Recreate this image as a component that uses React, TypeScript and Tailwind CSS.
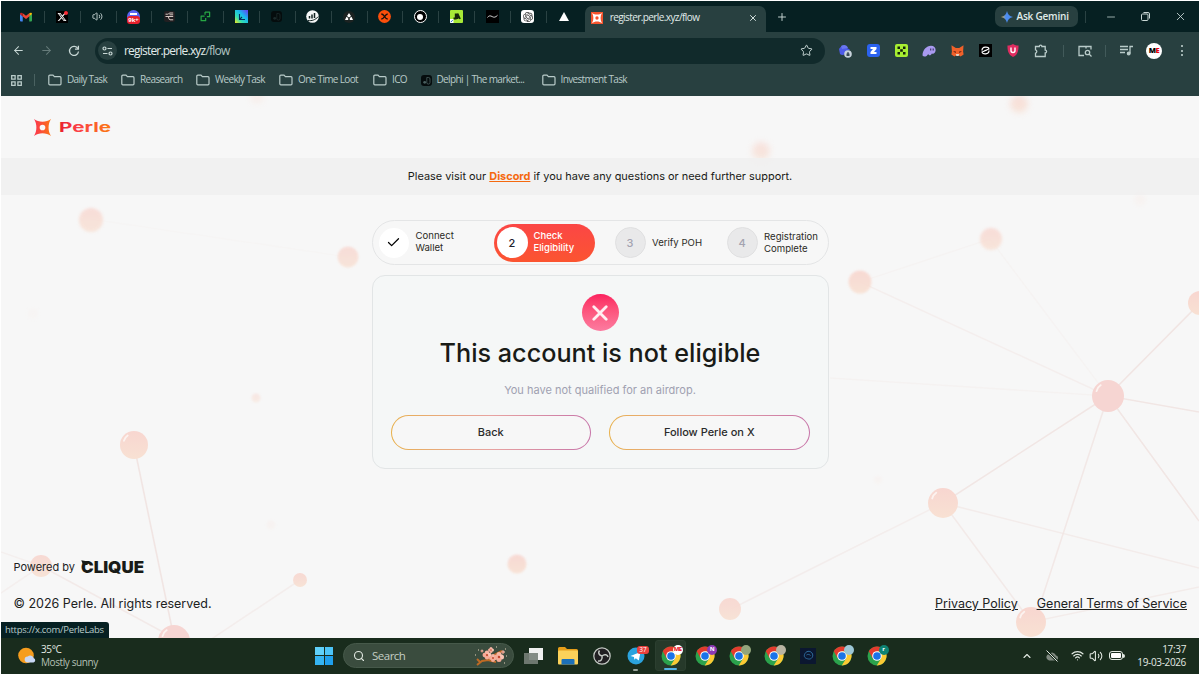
import { ReactNode } from "react";
import {
  ArrowLeft,
  ArrowRight,
  Check,
  ChevronUp,
  Minus,
  Plus,
  Search,
  Star,
  Volume2,
  Wifi,
  X,
} from "lucide-react";
import { FaXTwitter } from "react-icons/fa6";
import { SiOpenai } from "react-icons/si";

const tabIcons: ReactNode[] = [
  <svg key="gmail" width="12" height="10" viewBox="0 0 24 18">
    <path d="M0 2v14a2 2 0 0 0 2 2h3.500V8z" fill="#4285f4" />
    <path d="M24 2v14a2 2 0 0 1-2 2h-3.500V8z" fill="#34a853" />
    <path d="M18.500 8V1.500C20 0 24-.5 24 3z" fill="#fbbc04" />
    <path d="M5.500 8l6.500 5 6.500-5V1.500L12 6.500 5.500 1.500z" fill="#ea4335" />
    <path d="M0 3.500V3C0-.5 4 0 5.500 1.500V8z" fill="#c5221f" />
  </svg>,
  <span key="x" className="relative flex size-3 items-center justify-center bg-black text-white">
    <FaXTwitter size={10} />
    <span className="absolute top-0 right-0 size-[4px] rounded-full bg-red-500" />
  </span>,
  <Volume2 key="sound" size={11} className="text-[#c9d8d6]" />,
  <span key="chat" className="relative size-[13px] rounded-full bg-[#5865f2]">
    <span className="absolute top-[3px] left-[3px] h-[2px] w-[7px] bg-white" />
    <span className="absolute bottom-[-1px] left-0 flex h-[8px] w-[13px] items-center justify-center rounded-[3px] bg-[#e6202c] text-[6px] font-bold text-white">
      9k+
    </span>
  </span>,
  <svg key="e" width="11" height="11" viewBox="0 0 11 11" fill="none">
    <rect width="11" height="11" rx="2" fill="#211f21" />
    <path d="M1.500 3.200h2.300C5 3.200 4.500 2 6 2h3.200M1.500 5.500h7.700M3.800 5.500c1.200 0 .7 3.300 2.200 3.300h3.200M5.500 3.800h3.700" stroke="#d8c9c4" />
  </svg>,
  <svg key="green" width="11" height="11" viewBox="0 0 12 12" fill="none" stroke="#27a844" strokeWidth="1.300" strokeLinejoin="round">
    <path d="M5.500 1.200h5v5h-3M5 5.500H1.200v5h5V7.500M5.500 1.200v3" />
  </svg>,
  <svg key="l" width="13" height="13" viewBox="0 0 13 13">
    <defs>
      <linearGradient id="lg" x1="0" y1="1" x2="1" y2="0">
        <stop offset="0" stopColor="#f7e51b" />
        <stop offset=".3" stopColor="#35e0b0" />
        <stop offset=".6" stopColor="#17b9ee" />
        <stop offset="1" stopColor="#6b35f0" />
      </linearGradient>
    </defs>
    <rect width="13" height="13" fill="url(#lg)" />
    <path d="M4.500 4v5.500H10M4.500 9.500L7 7" stroke="#072b5c" strokeWidth="1.100" fill="none" />
  </svg>,
  <DelphiIcon key="delphi" dim />,
  <svg key="bars" width="13" height="13" viewBox="0 0 13 13">
    <circle cx="6.500" cy="6.500" r="6.300" fill="#f4f6f6" />
    <path d="M3.500 8.500V6M6 8.500V4.500M8.500 8V3" stroke="#10211f" strokeWidth="1.500" />
    <path d="M2 10.500c4 .6 7-.5 10.500-4" stroke="#10211f" fill="none" />
  </svg>,
  <svg key="peak" width="12" height="12" viewBox="0 0 12 12">
    <circle cx="6" cy="6" r="6" fill="#1b2221" />
    <path d="M6 2l2 3-2 1.500L4 5zM3.500 5.700L5.200 7v2H2zM8.500 5.700L6.800 7v2H10z" fill="#fff" />
  </svg>,
  <svg key="orange" width="13" height="13" viewBox="0 0 13 13">
    <circle cx="6.500" cy="6.500" r="6.400" fill="#fc4f0b" />
    <path
      d="M3.300 4c2.500.2 2.500 2 3.200 2.500C7.200 7 7.200 4.200 9.700 4M3.300 9c2.500-.2 2.500-2 3.200-2.500.7.500.7 2.300 3.200 2.500"
      stroke="#17100c"
      strokeWidth="1.300"
      fill="none"
    />
  </svg>,
  <span key="ring" className="flex size-[13px] items-center justify-center rounded-full border-[1.500px] border-white bg-black">
    <span className="size-[6px] rounded-full bg-white" />
  </span>,
  <svg key="lime" width="13" height="13" viewBox="0 0 13 13">
    <rect width="13" height="13" rx="1" fill="#a7e937" />
    <path d="M3.500 8.500h2.200V3.500M7.500 9V3.500L10 9" stroke="#16260a" strokeWidth="1.800" fill="none" />
    <path d="M0 9h3.500v4H0z" fill="#fff" />
    <path d="M.7 12.200l2-2" stroke="#2463c8" />
  </svg>,
  <svg key="wave" width="13" height="13" viewBox="0 0 13 13">
    <rect width="13" height="13" fill="#000" />
    <path d="M1.500 7.500c1.200-2 3-2 4.700-.9C8 7.600 9.500 7.500 11.500 5.300" stroke="#e7e7e7" strokeWidth=".9" fill="none" />
  </svg>,
  <span key="gpt" className="flex size-[13px] items-center justify-center rounded-[3px] bg-white text-[#333]">
    <SiOpenai size={10} />
  </span>,
  <svg key="tri" width="10" height="9" viewBox="0 0 10 9">
    <path d="M5 0l5 9H0z" fill="#fff" />
  </svg>,
];

function DelphiIcon({ dim = false }: { dim?: boolean }) {
  const ink = dim ? "#1c2b2c" : "#4a6060";
  return (
    <svg width="11" height="11" viewBox="0 0 11 11" className="shrink-0">
      <rect width="11" height="11" rx="3" fill="#050c0d" />
      <path d="M5.800 2.500h1.700A1.500 1.500 0 0 1 9 4v3.500A1.500 1.500 0 0 1 5.800 7.500z" fill="none" stroke={ink} strokeWidth=".8" />
      <circle cx="3.700" cy="7.300" r="1.400" fill={ink} />
    </svg>
  );
}

function FolderIcon() {
  return (
    <svg width="14" height="12" viewBox="0 0 14 12" fill="none" stroke="#b9cbc9" strokeWidth="1.200" className="shrink-0">
      <path d="M.8 9.800V2.200A1 1 0 0 1 1.800 1.200H5L6.400 2.700h5.600a1 1 0 0 1 1 1v6.100a1 1 0 0 1-1 1H1.800a1 1 0 0 1-1-1z" />
    </svg>
  );
}

function ReloadIcon() {
  return (
    <svg width="12" height="12" viewBox="0 0 12 12" fill="none" stroke="#c9d8d6" strokeWidth="1.300">
      <path d="M9.900 3.600A4.500 4.500 0 1 0 10.500 6.500" />
      <path d="M10.400.8v3.400H7" />
    </svg>
  );
}

function TuneIcon() {
  return (
    <svg width="11" height="10" viewBox="0 0 11 10" fill="none" stroke="#c9d8d6" strokeWidth="1.200">
      <circle cx="2.500" cy="2.500" r="1.500" />
      <path d="M5.500 2.500H10M1 7.500h4.500" />
      <circle cx="8.500" cy="7.500" r="1.500" />
    </svg>
  );
}

function PerleMark({ size, fill }: { size: number; fill: string }) {
  return (
    <svg width={size} height={size} viewBox="0 0 18 18" className="shrink-0">
      <defs>
        <linearGradient id="perle" x1="0" y1="0" x2="1" y2="0">
          <stop offset="0" stopColor="#fb3350" />
          <stop offset="1" stopColor="#fb7414" />
        </linearGradient>
      </defs>
      <path
        fillRule="evenodd"
        fill={fill}
        d="M0 0C5 3.800 13 3.800 18 0C14.600 5 14.600 13 18 18C13 14.200 5 14.200 0 18C3.400 13 3.400 5 0 0zM9 6A3 3 0 1 0 9 12A3 3 0 1 0 9 6z"
      />
    </svg>
  );
}

const extensions: ReactNode[] = [
  <svg key="bird" width="14" height="14" viewBox="0 0 14 14">
    <path d="M1 5C3 1.500 7 1 9 4l3 1.500-3 1.500c-1 4-5 5-7 3z" fill="#4d5be8" />
    <path d="M3 2C6 0 9 1 10 4L4 5z" fill="#6a76f2" />
    <circle cx="10" cy="10" r="3.800" fill="#c8d3dc" />
    <path d="M8.500 9.500h3v2.500h-3zM9.200 9.500V8.200h1.600v1.300" fill="#394b58" />
  </svg>,
  <span key="z" className="flex size-[13px] items-center justify-center rounded-[3px] bg-[#2b62ef]">
    <svg width="7" height="7" viewBox="0 0 7 7">
      <path d="M.5 0h6v2L4 5h2.500v2h-6V5L3 2H.5z" fill="#fff" />
    </svg>
  </span>,
  <svg key="okx" width="13" height="13" viewBox="0 0 13 13">
    <rect width="13" height="13" rx="2" fill="#a7ee32" />
    <path d="M2.500 2.500H5V5H2.500zM8 2.500h2.500V5H8zM5.200 5.200h2.600v2.600H5.200zM2.500 8H5v2.500H2.500zM8 8h2.500v2.500H8z" fill="#13200b" />
  </svg>,
  <svg key="ghost" width="14" height="12" viewBox="0 0 14 12">
    <path d="M.5 10.500C.5 5 4.500.7 9 .7c3 0 4.800 2 4.600 4.800-.2 2.500-2 3.800-3.700 3-1 2.300-3 2.300-3.700.5-1.300 2.500-4.200 3.600-5.700 1.500z" fill="#a99af0" />
    <path d="M8.700 3.500v2M11.200 3.500v2" stroke="#3c3264" strokeWidth="1.100" />
  </svg>,
  <svg key="fox" width="13" height="12" viewBox="0 0 13 12">
    <path d="M.5.3l4.300 2.800h3.400L12.500.3l-.4 6.200.5 3-3 2-2-1.200H5.400l-2 1.200-3-2 .5-3z" fill="#f0612a" />
    <path d="M2 6.500l2.500-.2L5 8zM11 6.500l-2.500-.2L8 8z" fill="#571b12" />
    <path d="M4.800 9h3.400l-.5 2H5.300z" fill="#e8d0bd" />
  </svg>,
  <svg key="s" width="13" height="13" viewBox="0 0 13 13" fill="none">
    <rect width="13" height="13" fill="#000" />
    <path d="M3 6.500C3 2 9.500 2.500 10 5L5 7M10 6.500c0 4.500-6.500 4-7 1.500l5-2" stroke="#fff" strokeWidth="1.200" />
  </svg>,
  <svg key="shield" width="12" height="13" viewBox="0 0 12 13">
    <path d="M6 0c2 1.300 3.700 1.500 5.500 1.500C11.700 7 10.500 11 6 13 1.500 11 .3 7 .5 1.500 2.300 1.500 4 1.300 6 0z" fill="#e02c60" />
    <path d="M4 3.500v3a2 2 0 0 0 4 0v-3" stroke="#fff" strokeWidth="1.400" fill="none" />
  </svg>,
  <svg key="puzzle" width="14" height="14" viewBox="0 0 14 14" fill="none" stroke="#b9cbc9" strokeWidth="1.300">
    <path d="M1.500 2.500h3.800a1.300 1.300 0 0 1 2.600 0h3.300v3.700a1.400 1.400 0 0 1 0 2.800v3.500H1.500V9.200a1.700 1.700 0 0 0 0-3.300z" />
  </svg>,
];

const bookmarks = [
  { label: "Daily Task", width: "w-[73px]" },
  { label: "Reasearch", width: "w-[75px]" },
  { label: "Weekly Task", width: "w-[83px]" },
  { label: "One Time Loot", width: "w-[94px]" },
  { label: "ICO", width: "w-[47.500px]" },
  { label: "Delphi | The market...", width: "w-[121px]", delphi: true },
  { label: "Investment Task", width: "w-[100px]" },
];

function BrowserChrome() {
  return (
    <header className="flex h-[95px] shrink-0 flex-col bg-[#284040] font-['Open_Sans',sans-serif] text-[#c9d8d6]">
      <div className="flex h-[31px] bg-[#062022] pl-[7px]">
        {tabIcons.map((icon, i) => (
          <div key={i} className="flex w-[35.870px] items-center">
            <div className="flex flex-1 items-center justify-center">{icon}</div>
            {i < 15 && <span className="-mr-px h-3 w-px bg-[#2a4243]" />}
          </div>
        ))}
        <div className="relative mt-[5px] ml-[3px] flex h-[26px] w-[181px] items-center rounded-t-[7px] bg-[#284040] pr-[8px] pl-[6px] pb-[3px] text-[#e1ecea]">
          <span className="flex size-3 items-center justify-center bg-[#f4532d]">
            <PerleMark size={10} fill="#fff" />
          </span>
          <span className="ml-[7px] flex-1 text-[10px] tracking-[-0.590px] whitespace-nowrap">register.perle.xyz/flow</span>
          <X size={10} strokeWidth={2.200} />
        </div>
        <Plus size={12} className="mt-[10px] ml-[10px]" strokeWidth={1.900} />
        <div className="ml-auto flex items-center pr-[12px]">
          <div className="flex h-[21px] w-[83px] items-center rounded-[7px] bg-[#284040] pl-[6px]">
            <svg width="12" height="12" viewBox="0 0 12 12">
              <defs>
                <linearGradient id="gem" x1="0" y1="0" x2="1" y2="0">
                  <stop offset="0" stopColor="#e8b33d" />
                  <stop offset=".4" stopColor="#4b8cf0" />
                  <stop offset="1" stopColor="#4b8cf0" />
                </linearGradient>
              </defs>
              <path d="M6 0c.7 3.500 2.500 5.300 6 6-3.500.7-5.300 2.500-6 6-.7-3.500-2.500-5.300-6-6 3.500-.7 5.300-2.500 6-6z" fill="url(#gem)" />
            </svg>
            <span className="ml-[4px] text-[10px] font-semibold tracking-[-0.200px] whitespace-nowrap text-[#e1ecea]">Ask Gemini</span>
          </div>
          <span className="ml-[7px] h-3 w-px bg-[#2a4243]" />
          <Minus size={12} strokeWidth={1.500} className="ml-[19px]" />
          <svg width="9" height="9" viewBox="0 0 9 9" fill="none" stroke="currentColor" className="ml-[24px]">
            <rect x=".5" y="2" width="6.500" height="6.500" rx="1" />
            <path d="M2.500.5H7A1.500 1.500 0 0 1 8.500 2v4.500" />
          </svg>
          <X size={13} strokeWidth={1.600} className="ml-[24.500px]" />
        </div>
      </div>

      <div className="flex h-[37px] items-center pl-[10.500px]">
        <ArrowLeft size={13} strokeWidth={1.900} />
        <ArrowRight size={13} strokeWidth={1.900} className="ml-[15px] text-[#677c7b]" />
        <span className="ml-[15.500px]">
          <ReloadIcon />
        </span>
        <div className="ml-[15px] flex h-[26px] w-[730px] items-center rounded-full bg-[#112a2b] pr-[12px] pl-[3px]">
          <span className="flex size-[19px] items-center justify-center rounded-full bg-[#284040]">
            <TuneIcon />
          </span>
          <span className="ml-[7px] flex-1 text-[12px] tracking-[-0.800px] text-[#e1ecea]">
            register.perle.xyz<span className="text-[#b0c2c0]">/flow</span>
          </span>
          <Star size={13} strokeWidth={1.800} />
        </div>
        <div className="ml-[6px] flex">
          {extensions.map((icon, i) => (
            <span key={i} className="flex w-[28px] items-center justify-center">
              {icon}
            </span>
          ))}
        </div>
        <span className="ml-[8px] h-3 w-px bg-[#425a5a]" />
        <svg width="14" height="12" viewBox="0 0 14 12" fill="none" stroke="#b9cbc9" strokeWidth="1.300" className="ml-[14px]">
          <path d="M6 10.500H1V1.500h12v3M8 1.500v2" />
          <circle cx="9.500" cy="7.500" r="2.200" />
          <path d="M11 9l2.500 2.500" />
        </svg>
        <span className="ml-[13px] h-3 w-px bg-[#425a5a]" />
        <svg width="13" height="11" viewBox="0 0 13 11" fill="none" stroke="#b9cbc9" strokeWidth="1.300" className="ml-[14px]">
          <path d="M0 1.500h8M0 4.500h8M0 7.500h5M10 8.500V1.500h3" />
          <circle cx="8.700" cy="8.500" r="1.300" fill="#b9cbc9" />
        </svg>
        <span className="ml-[13px] flex size-4 items-center justify-center rounded-full bg-white text-[7.500px] font-extrabold tracking-[-0.500px] text-black">
          M<span className="text-red-600">E</span>
        </span>
        <span className="ml-[19px] flex flex-col gap-[2.500px]">
          <i className="size-[2px] rounded-full bg-[#c9d8d6]" />
          <i className="size-[2px] rounded-full bg-[#c9d8d6]" />
          <i className="size-[2px] rounded-full bg-[#c9d8d6]" />
        </span>
      </div>

      <div className="flex h-[22px] items-center pl-[10px] text-[10px]">
        <svg width="11" height="11" viewBox="0 0 11 11" fill="none" stroke="#b9cbc9" strokeWidth="1.300">
          <path d="M.7.7h3.400v3.400H.7zM6.900.7h3.400v3.400H6.900zM.7 6.900h3.400v3.400H.7zM6.900 6.900h3.400v3.400H6.900z" />
        </svg>
        <span className="ml-[12px] h-3 w-px bg-[#4a6261]" />
        <div className="ml-[13px] flex">
          {bookmarks.map((b) => (
            <span key={b.label} className={`flex shrink-0 items-center whitespace-nowrap tracking-[-0.650px] text-[#b9cbc9] ${b.width}`}>
              {b.delphi ? <DelphiIcon /> : <FolderIcon />}
              <span className="ml-[5px] pb-px">{b.label}</span>
            </span>
          ))}
        </div>
      </div>
    </header>
  );
}

const lines = [
  [1108, 396, 860, 282, 0.45],
  [1108, 396, 990, 239, 0.2],
  [860, 282, 990, 239, 0.2],
  [1108, 396, 830, 378, 0.25],
  [1108, 396, 1199, 304, 1],
  [1108, 396, 1199, 412, 0.9],
  [1108, 396, 943, 503, 0.9],
  [1108, 396, 1035, 620, 0.8],
  [1108, 396, 1199, 521, 0.9],
  [943, 503, 731, 609, 0.5],
  [943, 503, 1199, 568, 0.6],
  [943, 503, 1031, 622, 0.7],
  [1031, 622, 1199, 587, 0.6],
  [134, 445, 174, 638, 1],
  [41, 566, 174, 638, 0.7],
  [41, 566, 1, 552, 0.4],
  [41, 566, 1, 593, 0.4],
  [174, 664, 300, 580, 0.5],
  [90, 219, 348, 257, 0.1],
];

// x, y, radius, blur, opacity
const nodes = [
  [1108, 396, 16, 0, 1],
  [943, 503, 15, 0, 1],
  [1031, 622, 15, 0, 1],
  [1200, 303, 12, 0.5, 1],
  [860, 282, 11.5, 0.8, 0.9],
  [991, 239, 11, 1.5, 0.8],
  [1019, 104, 9, 3, 0.8],
  [761, 151, 9, 3, 0.7],
  [257, 97, 7, 3, 0.3],
  [91, 220, 12, 1.5, 0.8],
  [348, 257, 10.5, 1.2, 0.8],
  [134, 445, 14, 0, 1],
  [174, 641, 16, 0, 1],
  [41, 566, 11, 0.6, 0.9],
  [300, 580, 7, 0.4, 0.9],
  [517, 564, 9.5, 1, 0.9],
  [730, 609, 11, 0.6, 0.9],
  [256, 398, 4.5, 1, 0.5],
  [271, 525, 4.5, 1, 0.15],
  [878, 480, 4, 1, 0.12],
  [1140, 200, 6, 2, 0.15],
  [33, 314, 5, 2, 0.1],
];

const reds = [0, 12];

function NetworkBackdrop() {
  return (
    <svg className="absolute inset-0 size-full" viewBox="1 96 1198 542" preserveAspectRatio="none">
      <defs>
        <linearGradient id="orb" x1="0" y1="0" x2="0" y2="1">
          <stop offset="0" stopColor="#f8d6d0" />
          <stop offset="1" stopColor="#f8e1d3" />
        </linearGradient>
      </defs>
      {lines.map(([x1, y1, x2, y2, o], i) => (
        <line key={i} x1={x1} y1={y1} x2={x2} y2={y2} stroke="#f1e5e3" strokeWidth="1.600" opacity={o} />
      ))}
      {nodes.map(([x, y, r, blur, o], i) => (
        <g key={i} opacity={o} style={blur ? { filter: `blur(${blur}px)` } : undefined}>
          <circle cx={x} cy={y} r={r} fill={reds.includes(i) ? "#f6d5d2" : "url(#orb)"} />
          {r > 13 && (
            <path
              d={`M${x - r * 0.72} ${y - r * 0.3}Q${x - r * 0.65} ${y - r * 0.55} ${x - r * 0.45} ${y - r * 0.68}`}
              stroke="#fcf3f0"
              strokeWidth="1.800"
              strokeLinecap="round"
              fill="none"
            />
          )}
        </g>
      ))}
    </svg>
  );
}

function Step({ n, children }: { n: number; children: ReactNode }) {
  return (
    <div className="flex items-center gap-[6.500px]">
      <span className="flex size-[31px] items-center justify-center rounded-full border border-[#e0e0e1] bg-[#e9e9ea] text-[11px] font-medium text-[#a3a3b0]">
        {n}
      </span>
      <span>{children}</span>
    </div>
  );
}

function Stepper() {
  return (
    <div className="flex h-[45px] w-[457px] items-center rounded-full border border-[#e4e5e6] bg-[#f7f7f7] pl-[6px] text-[9.600px] leading-[12px] text-[#2b2b26]">
      <div className="flex w-[115px] items-center gap-[7px]">
        <span className="flex size-[30px] items-center justify-center rounded-full bg-white text-black">
          <Check size={15} strokeWidth={2} />
        </span>
        <span className="-mt-px">
          Connect
          <br />
          Wallet
        </span>
      </div>
      <div className="flex h-[38px] w-[101px] items-center gap-[6px] rounded-full bg-linear-to-b from-[#fb4645] to-[#fb5430] pl-[3px] font-medium text-white">
        <span className="flex size-[31px] items-center justify-center rounded-full bg-white text-[11px] text-[#20202c]">2</span>
        <span className="-mt-px text-[9.500px]">
          Check
          <br />
          Eligibility
        </span>
      </div>
      <div className="ml-[20px] w-[112px]">
        <Step n={3}>Verify POH</Step>
      </div>
      <Step n={4}>
        Registration
        <br />
        Complete
      </Step>
    </div>
  );
}

function GradientButton({ label }: { label: string }) {
  return (
    <button className="h-[35px] flex-1 rounded-full bg-linear-to-r from-[#e8b04a] via-[#e8a3a0] to-[#c774a8] p-px">
      <span className="flex size-full items-center justify-center rounded-full bg-[#f7f7f7] text-[11px] font-medium text-[#2b2b2b]">{label}</span>
    </button>
  );
}

function EligibilityCard() {
  return (
    <section className="mt-[10px] flex h-[194px] w-[457px] flex-col items-center rounded-[13px] border border-[#e2e5e6] bg-[#f5f7f7] px-[18px] pt-[18px]">
      <span className="flex size-[37px] items-center justify-center rounded-full bg-linear-to-b from-[#fb1f5f] to-[#fc7ba0] text-white/90">
        <svg width="16" height="16" viewBox="0 0 16 16" stroke="currentColor" strokeWidth="2.800" strokeLinecap="round">
          <path d="M1.800 1.800l12.400 12.400M14.200 1.800L1.800 14.200" />
        </svg>
      </span>
      <h1 className="mt-[6px] text-[25.200px] leading-[32px] font-medium whitespace-nowrap text-[#191b17]">This account is not eligible</h1>
      <p className="mt-[12.500px] text-[11px] leading-[16px] text-[#a0a1b1]">You have not qualified for an airdrop.</p>
      <div className="mt-[17.500px] flex w-full gap-[18px]">
        <GradientButton label="Back" />
        <GradientButton label="Follow Perle on X" />
      </div>
    </section>
  );
}

function PerlePage() {
  return (
    <main className="relative flex min-h-0 flex-1 flex-col overflow-hidden bg-[#f7f7f7] font-['Inter',sans-serif] text-[#20221e]">
      <NetworkBackdrop />
      <div className="relative flex h-[62px] shrink-0 items-center gap-[8px] pl-[33px]">
        <PerleMark size={17} fill="url(#perle)" />
        <svg width="54" height="18" viewBox="0 0 54 18">
          <text x="0" y="13.500" fontSize="13" fontWeight="700" fontFamily="Inter" textLength="52" lengthAdjust="spacingAndGlyphs" fill="url(#perleText)">
            Perle
          </text>
          <defs>
            <linearGradient id="perleText" x1="0" y1="0" x2="1" y2="0">
              <stop offset="0" stopColor="#e8202c" />
              <stop offset=".35" stopColor="#fb3f48" />
              <stop offset="1" stopColor="#fb7a10" />
            </linearGradient>
          </defs>
        </svg>
      </div>
      <div className="relative flex h-[37px] shrink-0 items-center justify-center bg-[#f0f0f0]/90 text-[10.930px] whitespace-nowrap text-[#191b17]">
        <span>
          Please visit our <a className="font-bold text-[#f5690f] underline">Discord</a> if you have any questions or need further support.
        </span>
      </div>
      <div className="relative mt-[25px] flex flex-col items-center">
        <Stepper />
        <EligibilityCard />
      </div>
      <footer className="relative mt-auto flex flex-col pb-[26px] pl-[12.500px]">
        <div className="flex items-center gap-[6px] text-[11px]">
          <span>Powered by</span>
          <svg width="70" height="20" viewBox="0 0 70 20">
            <text x="0" y="15.800" fontSize="16" fontWeight="900" fontFamily="Inter" textLength="63" lengthAdjust="spacingAndGlyphs" fill="#191b17">
              CLIQUE
            </text>
            <path d="M.3 3.200L7 4.500l-.5 3.500H2z" fill="#191b17" />
          </svg>
        </div>
        <div className="mt-[18px] flex justify-between pr-[12px] text-[12.500px] leading-[17px]">
          <span>© 2026 Perle. All rights reserved.</span>
          <span className="flex gap-[19px] underline">
            <a>Privacy Policy</a>
            <a>General Terms of Service</a>
          </span>
        </div>
      </footer>
      <span className="absolute bottom-0 left-0 flex h-[16px] w-[108px] items-center rounded-tr-[3px] bg-[#062022] pl-[4px] font-['Open_Sans',sans-serif] text-[9.500px] tracking-[-0.300px] whitespace-nowrap text-[#b9cbc9]">
        https://x.com/PerleLabs
      </span>
    </main>
  );
}

function ChromeIcon({ badge, text }: { badge?: string; text?: string }) {
  return (
    <span className="relative">
      <svg width="20" height="20" viewBox="0 0 20 20">
        <circle cx="10" cy="10" r="9.500" fill="#2ba24c" />
        <path d="M10 5.200h8.200A9.500 9.500 0 0 1 9.700 19.500l4.500-7z" fill="#fcc934" />
        <path d="M1.800 5.200A9.500 9.500 0 0 1 18.200 5.200H10L5.800 12.400z" fill="#e33b2e" />
        <circle cx="10" cy="10" r="4.800" fill="#fff" />
        <circle cx="10" cy="10" r="3.800" fill="#1a73e8" />
      </svg>
      {badge && (
        <span className={`absolute -top-px -right-[2px] flex size-[10px] items-center justify-center rounded-full text-[6px] font-bold ${badge}`}>{text}</span>
      )}
    </span>
  );
}

function Taskbar() {
  return (
    <footer className="flex h-[36px] shrink-0 items-center bg-[#192c1d] pb-px font-['Open_Sans',sans-serif] text-[10px] text-[#e3eae3]">
      <div className="flex w-[314px] items-center pl-[17px]">
        <svg width="18" height="18" viewBox="0 0 18 18">
          <circle cx="8" cy="8.500" r="7.800" fill="#f59d1e" />
          <path d="M9.500 15.500a3 3 0 0 1 .3-6 3.600 3.600 0 0 1 6 1.800 2.200 2.200 0 0 1-.3 4.200z" fill="#c9d8f5" />
        </svg>
        <span className="ml-[5px] leading-[12.500px] tracking-[-0.400px]">
          35°C
          <br />
          <span className="text-[#b5c0b5]">Mostly sunny</span>
        </span>
      </div>
      <div className="grid size-[18px] shrink-0 grid-cols-2 gap-px">
        <i className="bg-[#5fd0fa]" />
        <i className="bg-[#4cc4f8]" />
        <i className="bg-[#35b4f2]" />
        <i className="bg-[#1f9fec]" />
      </div>
      <div className="ml-[10px] flex h-[25px] w-[171px] items-center rounded-full border border-[#46594a] bg-[#3a4c3e] pr-[3px] pl-[9px]">
        <Search size={12} strokeWidth={2.200} />
        <span className="ml-[7px] flex-1 text-[11.500px] tracking-[-0.500px] text-[#c4cec5]">Search</span>
        <svg width="38" height="22" viewBox="0 0 38 22">
          <path d="M5 20l5-4 6-1 6-5 8-4M8 17l-3-3M16 15l8 2" stroke="#bf6a24" strokeWidth="2" fill="none" />
          {[
            [15, 10, 4.5],
            [21, 13, 4],
            [27, 12, 5],
            [19, 5, 3],
            [10, 6, 1.5],
            [31, 7, 1.8],
          ].map(([x, y, r], i) => (
            <g key={i}>
              <circle cx={x} cy={y - r / 2} r={r / 2} fill="#f6b6a6" />
              <circle cx={x - r / 2} cy={y} r={r / 2} fill="#f5ab98" />
              <circle cx={x + r / 2} cy={y} r={r / 2} fill="#f8c4b4" />
              <circle cx={x} cy={y + r / 2} r={r / 2} fill="#f5ab98" />
              <circle cx={x} cy={y} r={r / 4} fill="#c2492f" />
            </g>
          ))}
          <path d="M3 10h1M34 11h1M33 4h1M24 2h1M6 5h1M32 18h1" stroke="#e8d5bd" />
        </svg>
      </div>
      <div className="ml-[10px] flex items-center">
        <span className="flex w-[34.300px]">
          <svg width="20" height="18" viewBox="0 0 20 18">
            <rect x="5" y="1" width="14" height="12" fill="#f0f0f0" />
            <rect x="0" y="6" width="14" height="11" fill="#777f79" opacity=".9" />
          </svg>
        </span>
        <span className="flex w-[34.300px]">
          <svg width="20" height="18" viewBox="0 0 20 18">
            <path d="M0 1.500A1.500 1.500 0 0 1 1.500 0H7l2 2h9.500A1.500 1.500 0 0 1 20 3.500V6H0z" fill="#e79e1a" />
            <rect y="3.500" width="20" height="14" rx="1" fill="#fcd25a" />
            <path d="M3.500 17.500V13a1 1 0 0 1 1-1h11a1 1 0 0 1 1 1v4.500z" fill="#1c70b8" />
          </svg>
        </span>
        <span className="flex w-[34.300px]">
          <svg width="18" height="18" viewBox="0 0 18 18" fill="none">
            <circle cx="9" cy="9" r="8.200" fill="#211f22" stroke="#c5cac5" strokeWidth="1.200" />
            <path d="M9 9C5.500 8 5 5.500 6.500 3.500M9 9c2.700-2.500 5.500-1 6 1M9 9c.8 3.500-1.500 5.500-4 5" stroke="#c5cac5" strokeWidth="1.500" />
          </svg>
        </span>
        <span className="relative flex w-[34.300px] flex-col">
          <svg width="18" height="18" viewBox="0 0 18 18">
            <circle cx="9" cy="9" r="8.500" fill="#2ba3de" />
            <path d="M3.500 9l10-4-1.700 8.500-3-2.200-1.500 1.500-.3-2.800z" fill="#fff" />
          </svg>
          <span className="absolute -top-px left-[10px] flex h-[8px] w-[12px] items-center justify-center rounded-[3px] bg-[#e8403d] text-[6.500px] text-white">37</span>
          <span className="absolute top-[22px] left-[6px] h-[2px] w-[5px] rounded-full bg-[#9aa59b]" />
        </span>
      </div>
      <div className="flex items-center">
        <span className="relative -ml-[6px] flex h-[31px] w-[31px] items-center justify-center rounded-[3px] border border-[#2c3f30] bg-[#26392a]">
          <ChromeIcon badge="bg-white text-red-600 tracking-[-0.500px]" text="ME" />
          <span className="absolute bottom-0 h-[2px] w-[13px] rounded-full bg-[#55b4e6]" />
        </span>
        <div className="ml-[9px] flex items-center gap-[14.300px]">
          <ChromeIcon badge="bg-[#8a3ab5] text-white" text="N" />
          <ChromeIcon badge="bg-[#93a57c]" />
          <ChromeIcon badge="bg-[#b8b3a2]" />
          <span className="mx-[2px] flex size-4 items-center justify-center bg-[#0b1730]">
            <svg width="11" height="11" viewBox="0 0 11 11" fill="none" stroke="#2e6d9e">
              <path d="M2 3.500C4 0 8.500 1 9.500 4c1 2.500-1 5.500-4 5S0 7 2 3.500zM3.500 5c1-1 3-.7 4 .5" />
            </svg>
          </span>
          <ChromeIcon badge="bg-[#9cc7d6]" />
          <ChromeIcon badge="bg-[#0f8273] text-white" text="r" />
        </div>
      </div>
      <div className="ml-auto flex items-center pr-[13px]">
        <ChevronUp size={12} strokeWidth={2.200} />
        <svg width="14" height="12" viewBox="0 0 14 12" className="ml-[12px]">
          <path d="M4 10.500a3.200 3.200 0 0 1 0-6.300 4 4 0 0 1 7 1.200 2.600 2.600 0 0 1 0 5.100z" fill="#808a81" />
          <path d="M1.500.5l11 11" stroke="#192c1d" strokeWidth="2.500" />
          <path d="M1.500.5l11 11" stroke="#e3eae3" />
        </svg>
        <Wifi size={13} strokeWidth={2.200} className="ml-[12px]" />
        <Volume2 size={14} strokeWidth={1.800} className="ml-[5px]" />
        <span className="ml-[6px] flex h-[9px] w-[14px] items-center rounded-[3px] border border-[#e3eae3] p-px">
          <i className="h-full w-[10px] rounded-[1px] bg-white" />
        </span>
        <i className="h-[4px] w-[2px] rounded-r bg-[#e3eae3]" />
        <span className="ml-[12px] text-right leading-[12.500px] tracking-[-0.350px]">
          17:37
          <br />
          19-03-2026
        </span>
      </div>
    </footer>
  );
}

export default function App() {
  return (
    <div className="flex h-[676px] w-[1200px] flex-col overflow-hidden bg-white pt-px pr-px pb-[2px] pl-px">
      <BrowserChrome />
      <PerlePage />
      <Taskbar />
    </div>
  );
}
